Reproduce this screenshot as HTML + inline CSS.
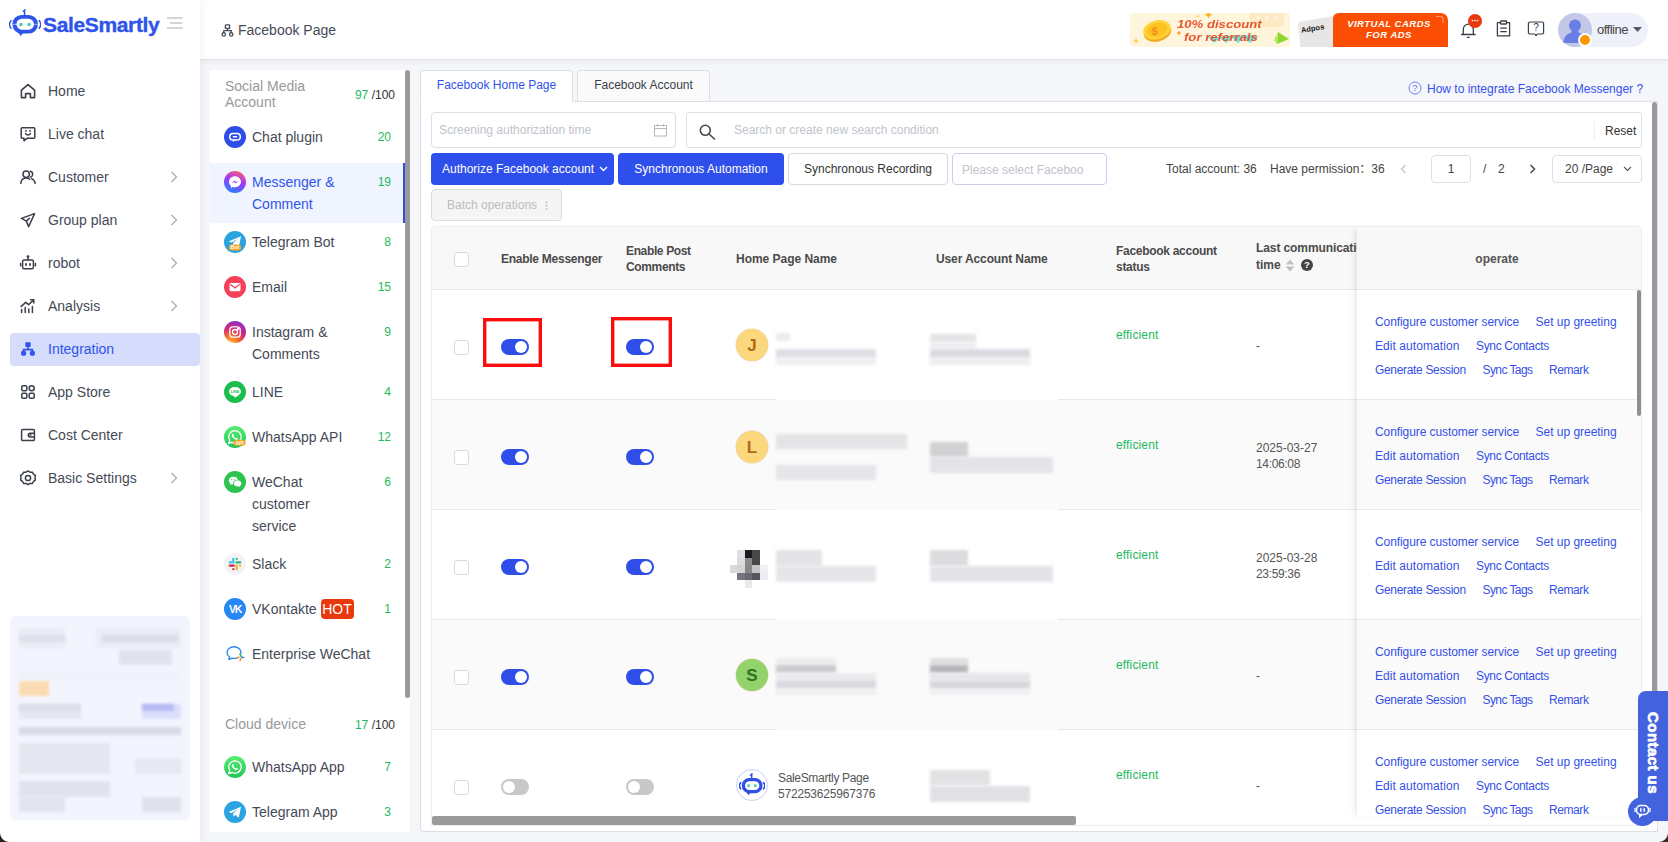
<!DOCTYPE html>
<html lang="en">
<head>
<meta charset="utf-8">
<title>Facebook Page - SaleSmartly</title>
<style>
*{box-sizing:border-box;margin:0;padding:0}
html,body{width:1668px;height:842px;overflow:hidden}
body{background:#f5f6f9;font-family:"Liberation Sans","Noto Sans CJK SC",sans-serif;font-size:14px;color:#333;position:relative}
.abs{position:absolute}
svg{display:block}
/* ---------- left sidebar ---------- */
#side{position:absolute;left:0;top:0;width:200px;height:842px;background:#fff;z-index:5;box-shadow:2px 0 8px rgba(29,35,41,.05)}
#logo-txt{position:absolute;left:43px;top:12.500px;-webkit-text-stroke:.4px #2f54eb;font-size:21px;line-height:24px;font-weight:bold;color:#2f54eb;letter-spacing:-0.35px;white-space:nowrap}
.nav{position:absolute;left:10px;width:190px;height:32px;border-radius:4px;font-size:14px;line-height:32px;color:#454a56;white-space:nowrap}
.nav span{position:absolute;left:38px;top:0}
.nav svg.ic{position:absolute;left:9px;top:7px}
.nav svg.ar{position:absolute;left:160px;top:10px}
.nav.on{background:#d6dcfb;color:#2f54eb;height:33px}
/* ---------- header ---------- */
#hdr{position:absolute;left:200px;top:0;width:1468px;height:60px;background:#fff;border-bottom:1px solid #e0e2e8;z-index:4;box-shadow:0 2px 6px rgba(0,21,41,.05)}
/* ---------- sub sidebar ---------- */
#sub{position:absolute;left:210px;top:70px;width:200px;height:762px;background:#fff;overflow:hidden}
.gh{position:absolute;left:0;width:200px;font-size:14px;line-height:16px;color:#999}
.gh .t{position:absolute;left:15px}
.gh .n{position:absolute;right:15px;font-size:12px;color:#333;white-space:nowrap}
.gh .n b{font-weight:normal;color:#1db95e}
.it{position:absolute;left:0;width:195px;font-size:14px;line-height:22px;color:#454a56}
.it .c{position:absolute;left:14px;top:8px;width:22px;height:22px;border-radius:50%;overflow:hidden}
.it .t{position:absolute;left:42px;top:8px;width:100px}
.it .n{position:absolute;right:14px;top:8px;font-size:12px;color:#1db95e}
.it.on{background:#f0f4ff;color:#2f54eb;border-right:2px solid #2f4de9}
.it.on .n{right:12px}
/* ---------- main ---------- */
#main{position:absolute;left:420px;top:102px;width:1238px;height:730px;background:#fff;border:1px solid #dcdfe6;border-top:none;border-radius:0 0 0 4px}
.tab{position:absolute;top:70px;height:32px;border:1px solid #dcdfe6;border-radius:4px 4px 0 0;font-size:12px;line-height:29px;text-align:center;white-space:nowrap}
.inp{position:absolute;border:1px solid #dcdfe6;border-radius:4px;background:#fff;font-size:12px;color:#c0c4cc;white-space:nowrap}
.btn{position:absolute;top:153px;height:32px;border-radius:4px;font-size:12px;line-height:32px;text-align:center;white-space:nowrap}
.btn.p{background:#2f4fec;color:#fff}
.btn.d{background:#fff;border:1px solid #d9d9d9;color:#333;line-height:30px}
.pg{position:absolute;font-size:12px;color:#444;white-space:nowrap;line-height:28px;top:155px}
/* ---------- table ---------- */
#tb{position:absolute;left:431px;top:226px;width:1211px;height:600px;border:1px solid #ebedf0;border-radius:4px 4px 0 0;overflow:hidden;background:#fff;font-size:12px}
.th{position:absolute;left:0;top:0;width:1211px;height:63px;background:#f8f8f8;border-bottom:1px solid #e8e8e8}
.th div{position:absolute;font-weight:bold;font-size:12px;line-height:16px;color:#4a4a4a;white-space:nowrap}
.row{position:absolute;left:0;width:1211px;height:110px;border-bottom:1px solid #e8e8e8;background:#fff}
.row.alt{background:#fafafa}
.cb{position:absolute;left:22px;width:15px;height:15px;border:1px solid #d5dae6;border-radius:3px;background:#fff}
.sw{position:absolute;width:28px;height:16px;border-radius:8px;background:#2f4de9}
.sw:after{content:"";position:absolute;right:2px;top:2px;width:12px;height:12px;border-radius:50%;background:#fff}
.sw.off{background:#c8c8c8}
.sw.off:after{right:auto;left:2px}
.av{position:absolute;left:304px;width:32px;height:32px;border-radius:50%;font-weight:bold;font-size:17px;line-height:33px;text-align:center}
.bl{position:absolute;background:#e3e3e6;filter:blur(1.5px)}
.ef{position:absolute;left:684px;color:#1db95e;line-height:16px;white-space:nowrap}
.tm{position:absolute;left:824px;color:#555;line-height:16px;white-space:nowrap}
#fx{position:absolute;left:1357px;top:227px;width:284px;height:590px;overflow:hidden;box-shadow:-4px 0 6px -2px rgba(0,0,0,.10)}
.op{position:absolute;left:0;width:284px;height:110px;border-bottom:1px solid #e8e8e8;background:#fff}
.op.alt{background:#fafafa}
.op a{position:absolute;color:#3550e8;font-size:12px;line-height:16px;white-space:nowrap;text-decoration:none}
.l0{letter-spacing:-.08px}.l1{letter-spacing:-.03px}.l2{letter-spacing:.07px}.l3{letter-spacing:-.34px}.l4{letter-spacing:-.33px}.l5{letter-spacing:-.58px}.l6{letter-spacing:-.42px}
</style>
</head>
<body>
<div id="side">
<svg class="abs" style="left:9px;top:9px" width="32" height="29" viewBox="9 9 32 29">
 <path d="M24.6 15.2V11.6l-1.2-.3 1.7-1.5" fill="none" stroke="#2f54eb" stroke-width="1.5" stroke-linecap="round" stroke-linejoin="round"/>
 <path d="M11 20.6a6 6 0 0 0 0 7.6M39.2 20.6a6 6 0 0 1 0 7.6" fill="none" stroke="#2f54eb" stroke-width="1.5" stroke-linecap="round"/>
 <rect x="12.4" y="14.9" width="25.5" height="18.7" rx="9.3" fill="#2f54eb"/>
 <path d="M18.2 32.5l2.6 3.6 2.6-3.6z" fill="#2f54eb"/>
 <rect x="16.4" y="18.8" width="17.6" height="10.9" rx="5.4" fill="#fff"/>
 <circle cx="20.9" cy="24.5" r="1.7" fill="#3ecfb6"/><circle cx="29.1" cy="24.5" r="1.7" fill="#3ecfb6"/>
 <path d="M12.4 24.3h4M34 24.3h4" stroke="#fff" stroke-width=".6"/>
</svg>
<div id="logo-txt">SaleSmartly</div>
<svg class="abs" style="left:167px;top:17px" width="16" height="12" viewBox="0 0 16 12"><path d="M0 1h15.5M3 6h12.5M0 11h15.5" stroke="#c5c8cf" stroke-width="1.3" fill="none"/></svg>

<div class="nav" style="top:75px"><svg class="ic" width="18" height="18" viewBox="0 0 18 18" fill="none" stroke="#3a3f4b" stroke-width="1.6" stroke-linejoin="round" stroke-linecap="round"><path d="M2.4 8.2 9 2.6l6.6 5.6v7.4h-4.2v-4H6.6v4H2.4z"/></svg><span>Home</span></div>

<div class="nav" style="top:118px"><svg class="ic" width="18" height="18" viewBox="0 0 18 18" fill="none" stroke="#3a3f4b" stroke-width="1.5" stroke-linejoin="round" stroke-linecap="round"><path d="M3.2 2.8h11.6a1 1 0 0 1 1 1v8.4a1 1 0 0 1-1 1H8.2L5 15.8v-2.6H3.2a1 1 0 0 1-1-1V3.8a1 1 0 0 1 1-1z"/><path d="M6.6 8.6c.6 1 1.4 1.4 2.4 1.4s1.800-.4 2.400-1.400"/><path d="M7 5.600v.6M11 5.600v.6"/></svg><span>Live chat</span></div>

<div class="nav" style="top:161px"><svg class="ic" width="18" height="18" viewBox="0 0 18 18" fill="none" stroke="#3a3f4b" stroke-width="1.5" stroke-linecap="round"><circle cx="7.200" cy="6.200" r="3.200"/><path d="M1.800 15.400c.3-3.400 2.400-5.400 5.400-5.400 1.400 0 2.600.4 3.500 1.200"/><path d="M11.400 3.300a3 3 0 0 1 0 5.800M12.600 10.600c2 .8 3.200 2.400 3.600 4.800"/></svg><span>Customer</span><svg class="ar" width="8" height="12" viewBox="0 0 8 12"><path d="M1.500 1l5 5-5 5" fill="none" stroke="#a9adb7" stroke-width="1.300"/></svg></div>

<div class="nav" style="top:204px"><svg class="ic" width="18" height="18" viewBox="0 0 18 18" fill="none" stroke="#3a3f4b" stroke-width="1.500" stroke-linejoin="round" stroke-linecap="round"><path d="M15.600 2.600 2.400 7.400l5 2.700 2.200 5.500zM7.400 10.100l3-2.900"/></svg><span>Group plan</span><svg class="ar" width="8" height="12" viewBox="0 0 8 12"><path d="M1.500 1l5 5-5 5" fill="none" stroke="#a9adb7" stroke-width="1.300"/></svg></div>

<div class="nav" style="top:247px"><svg class="ic" width="18" height="18" viewBox="0 0 18 18" fill="none" stroke="#3a3f4b" stroke-width="1.500" stroke-linejoin="round" stroke-linecap="round"><rect x="3.600" y="6" width="10.800" height="8.800" rx="1.600"/><path d="M9 6V3.200M1.600 9.400v2.400M16.400 9.400v2.400"/><path d="M7 9.800v1.200M11 9.800v1.200" stroke-width="1.800"/><circle cx="9" cy="2.600" r=".7" fill="#3a3f4b"/></svg><span>robot</span><svg class="ar" width="8" height="12" viewBox="0 0 8 12"><path d="M1.500 1l5 5-5 5" fill="none" stroke="#a9adb7" stroke-width="1.300"/></svg></div>

<div class="nav" style="top:290px"><svg class="ic" width="18" height="18" viewBox="0 0 18 18" fill="none" stroke="#3a3f4b" stroke-width="1.500" stroke-linecap="round" stroke-linejoin="round"><path d="M2.600 15.400v-2.800M6.200 15.400v-4.800M9.800 15.400v-3.400M13.400 15.400V9.600"/><path d="M2.200 9.400 6.800 5.400l2.800 2.200 5-4.600M11.600 2.800h3.200V6"/></svg><span>Analysis</span><svg class="ar" width="8" height="12" viewBox="0 0 8 12"><path d="M1.500 1l5 5-5 5" fill="none" stroke="#a9adb7" stroke-width="1.300"/></svg></div>

<div class="nav on" style="top:333px"><svg class="ic" width="18" height="18" viewBox="0 0 18 18"><rect x="6.300" y="2.200" width="5.400" height="4.800" rx=".8" fill="#2f54eb"/><path d="M9 7v2.400M4.600 12V9.600h8.800V12" fill="none" stroke="#2f54eb" stroke-width="1.600"/><circle cx="4.600" cy="13.200" r="2.600" fill="#2f54eb"/><circle cx="13.400" cy="13.200" r="2.600" fill="#2f54eb"/></svg><span>Integration</span></div>

<div class="nav" style="top:376px"><svg class="ic" width="18" height="18" viewBox="0 0 18 18" fill="none" stroke="#3a3f4b" stroke-width="1.500"><rect x="2.800" y="2.800" width="5" height="5" rx="1.200"/><rect x="10.200" y="2.800" width="5" height="5" rx="2.500"/><rect x="2.800" y="10.200" width="5" height="5" rx="1.200"/><rect x="10.200" y="10.200" width="5" height="5" rx="1.200"/></svg><span>App Store</span></div>

<div class="nav" style="top:419px"><svg class="ic" width="18" height="18" viewBox="0 0 18 18" fill="none" stroke="#3a3f4b" stroke-width="1.500" stroke-linejoin="round"><rect x="2.600" y="3.600" width="12.800" height="11" rx="1.200"/><path d="M15.400 7.200h-4.200a1.900 1.900 0 0 0 0 3.800h4.200"/><path d="M11 9.100h1" stroke-linecap="round"/></svg><span>Cost Center</span></div>

<div class="nav" style="top:462px"><svg class="ic" width="18" height="18" viewBox="0 0 18 18" fill="none" stroke="#3a3f4b" stroke-width="1.500" stroke-linejoin="round"><path d="M9 1.800l2 1.300 2.400-.1 1 2.100 2 1.300-.4 2.400.4 2.400-2 1.300-1 2.100-2.400-.1-2 1.300-2-1.300-2.400.1-1-2.100-2-1.300.4-2.400-.4-2.400 2-1.300 1-2.100 2.400.1z" transform="translate(0 .2) scale(1 .98)"/><circle cx="9" cy="9" r="2.600"/></svg><span>Basic Settings</span><svg class="ar" width="8" height="12" viewBox="0 0 8 12"><path d="M1.500 1l5 5-5 5" fill="none" stroke="#a9adb7" stroke-width="1.300"/></svg></div>

<div class="abs" style="left:10px;top:616px;width:180px;height:204px;background:#f3f5fe;border-radius:6px;overflow:hidden">
 <div class="bl" style="left:9px;top:12px;width:46px;height:20px;background:#eaecf5"></div><div class="bl" style="left:9px;top:19px;width:46px;height:7px;background:#dee0ea"></div>
 <div class="bl" style="left:86px;top:12px;width:85px;height:20px;background:#ebedf6"></div><div class="bl" style="left:92px;top:19px;width:76px;height:7px;background:#d9dbe6"></div>
 <div class="bl" style="left:109px;top:34px;width:53px;height:15px;background:#e1e2ed"></div>
 <div class="bl" style="left:9px;top:56px;width:162px;height:8px;background:#f0f2fb"></div>
 <div class="bl" style="left:9px;top:65px;width:30px;height:15px;background:#fbdcb2"></div>
 <div class="bl" style="left:9px;top:88px;width:62px;height:15px;background:#e6e7f1"></div><div class="bl" style="left:9px;top:88px;width:62px;height:7px;background:#dddeea"></div>
 <div class="bl" style="left:132px;top:88px;width:39px;height:15px;background:#dcdffb"></div><div class="bl" style="left:132px;top:88px;width:32px;height:7px;background:#b7bbf5"></div>
 <div class="bl" style="left:9px;top:111px;width:162px;height:8px;background:#d9dae7"></div>
 <div class="bl" style="left:9px;top:127px;width:91px;height:31px;background:#e4e6f0"></div>
 <div class="bl" style="left:125px;top:142px;width:46px;height:16px;background:#e7e8f2"></div>
 <div class="bl" style="left:9px;top:165px;width:91px;height:16px;background:#e1e2ed"></div>
 <div class="bl" style="left:9px;top:181px;width:46px;height:15px;background:#e2e4ee"></div>
 <div class="bl" style="left:132px;top:181px;width:39px;height:15px;background:#e0e1ec"></div>
</div>
<svg class="abs" style="left:0;top:833px" width="9" height="9" viewBox="0 0 9 9"><path d="M0 0A9 9 0 0 0 9 9H0z" fill="#2a2118"/></svg>
</div>
<div id="hdr">
<!-- coordinates inside #hdr are page-x minus 200 -->
<svg class="abs" style="left:20.500px;top:23.500px" width="13" height="13" viewBox="0 0 14 14" fill="none" stroke="#474c58" stroke-width="1.400"><rect x="4.700" y="1" width="4.600" height="3.800" rx=".6"/><path d="M7 4.800v2.400M3 9.400V7.200h8v2.200"/><circle cx="3" cy="11.200" r="1.800"/><circle cx="11" cy="11.200" r="1.800"/></svg>
<div class="abs" style="left:38px;top:21px;font-size:14px;line-height:18px;color:#454a56;white-space:nowrap">Facebook Page</div>

<!-- banner 1 -->
<div class="abs" style="left:930px;top:13px;width:160px;height:34px;background:#fff4dc;border-radius:4px;overflow:hidden">
 <div class="abs" style="left:120px;top:0;width:34px;height:14px;background:#fdeac4;border-radius:0 0 3px 3px"></div>
 <svg class="abs" style="left:0;top:0" width="160" height="34" viewBox="0 0 160 34">
  <ellipse cx="27.500" cy="19" rx="14" ry="9.500" fill="#f2a91c" transform="rotate(-14 27.500 19)"/>
  <ellipse cx="27" cy="16.800" rx="14" ry="9.400" fill="#ffd43a" transform="rotate(-14 27 16.800)"/>
  <ellipse cx="27" cy="16.800" rx="10.500" ry="6.800" fill="#ffc321" transform="rotate(-14 27 16.800)"/>
  <text x="21.500" y="21.500" font-family="Liberation Sans, sans-serif" font-size="11" font-weight="bold" font-style="italic" fill="#f08a1c" transform="rotate(-10 27 17)">$</text>
  <path d="M78.500 -2l1.300 2.700 2.700 1.100-2.700 1.200-1.300 2.700-1.300-2.700-2.700-1.200 2.700-1.100z" fill="#f9b91d"/>
  <path d="M68 1.200l.7 1.400 1.400.6-1.400.6-.7 1.400-.7-1.400-1.400-.6 1.400-.6z" fill="#fbd46a"/>
  <path d="M49 17.500l.9 1.700 1.700.8-1.700.8-.9 1.700-.9-1.700-1.700-.8 1.700-.8z" fill="#f9a11d"/>
  <path d="M6 25l1 2 2 .9-2 .9-1 2-1-2-2-.9 2-.9z" fill="#fbd05a"/>
  <path d="M78 24l6 6 6-5 6 5 6-5 6 5 6-5 6 5 8-6-4-2z" fill="#5ce1e6" opacity=".9"/>
  <path d="M148 19l11 7-12 5z" fill="#8fd634"/><path d="M148 19l-1 12-3-4z" fill="#b6ea5c"/>
  <circle cx="128" cy="4.500" r="1.600" fill="#fff6e3"/><circle cx="137" cy="4.500" r="1.600" fill="#fff6e3"/><circle cx="146" cy="4.500" r="1.600" fill="#fff6e3"/>
 </svg>
 <div class="abs" style="left:47px;top:6px;font-size:10.500px;line-height:11px;font-weight:bold;font-style:italic;color:#e4572e;white-space:nowrap;transform-origin:0 0;transform:scaleX(1.25)">10% discount</div>
 <div class="abs" style="left:54px;top:19px;font-size:10.500px;line-height:11px;font-weight:bold;font-style:italic;color:#e4572e;white-space:nowrap;transform-origin:0 0;transform:scaleX(1.25)">for referrals</div>
</div>

<!-- banner 2 -->
<div class="abs" style="left:1098px;top:13px;width:150px;height:34px;overflow:hidden;border-radius:0 7px 0 0">
 <svg class="abs" style="left:0;top:0" width="150" height="34" viewBox="0 0 150 34"><path d="M0 12q0-3 3-3.600L36 3v31H2.500z" fill="#e6e6e6"/><path d="M35 6q0-6 6-6h103q6 0 6 6v28H35z" fill="#fb4d03"/><path d="M138 3.500h4.500q2.500 0 2.500 2.500v4" fill="none" stroke="#fd9a6c" stroke-width="1.200"/><path d="M23 12.500q2.500-.5 3 1.800" fill="none" stroke="#fb4d03" stroke-width=".8"/></svg>
 <div class="abs" style="left:3px;top:11px;font-size:7.500px;line-height:10px;font-weight:bold;color:#222;transform:rotate(-9deg);white-space:nowrap">Adpos</div>
 <div class="abs" style="left:34.500px;top:6px;width:113px;text-align:center;font-size:9.500px;line-height:10.500px;font-weight:bold;font-style:italic;color:#fff;letter-spacing:.5px;white-space:nowrap">VIRTUAL CARDS<br>FOR ADS</div>
</div>

<!-- bell -->
<svg class="abs" style="left:1260px;top:21px" width="17" height="18" viewBox="0 0 17 18" fill="none" stroke="#3a3f4b" stroke-width="1.300" stroke-linecap="round" stroke-linejoin="round"><path d="M1.500 13.500h13.600M3.300 13.500V8.200a5 5 0 0 1 10 0v5.300M7.300 16.300h2"/></svg>
<div class="abs" style="left:1268px;top:14px;width:14px;height:14px;border-radius:50%;background:#e8380d;color:#fff;font-size:9px;line-height:14px;text-align:center;letter-spacing:-.5px;font-weight:bold">···</div>
<!-- clipboard -->
<svg class="abs" style="left:1296px;top:20px" width="15" height="17" viewBox="0 0 15 17" fill="none" stroke="#3a3f4b" stroke-width="1.300" stroke-linejoin="round"><path d="M4.500 2.600H1.400v13.200h12.200V2.600h-3.100"/><rect x="4.500" y="1" width="6" height="3" rx=".4"/><path d="M4.200 8.200h6.600M4.200 11.600h6.600"/></svg>
<!-- help -->
<svg class="abs" style="left:1327px;top:21px" width="18" height="16" viewBox="0 0 18 16" fill="none" stroke="#3a3f4b" stroke-width="1.200" stroke-linejoin="round"><path d="M2.800 1h12.400a1.400 1.400 0 0 1 1.400 1.400v9.200a1.400 1.400 0 0 1-1.400 1.400H10.200L9 14.600 7.800 13H2.800a1.400 1.400 0 0 1-1.400-1.400V2.400A1.400 1.400 0 0 1 2.800 1z"/></svg>
<div class="abs" style="left:1327px;top:22px;width:18px;text-align:center;font-size:10px;line-height:11px;color:#3a3f4b">?</div>
<!-- user -->
<div class="abs" style="left:1358px;top:13px;width:90px;height:34px;border-radius:17px;background:#eef1f9"></div>
<div class="abs" style="left:1358px;top:13px;width:34px;height:34px;border-radius:50%;background:#c3c8e8;overflow:hidden">
 <svg width="34" height="34" viewBox="0 0 34 34"><circle cx="17" cy="12.500" r="6" fill="#6a7ee6"/><path d="M5 30q1-9 8.500-10.500h7Q28 21 29 30z" fill="#6a7ee6"/><rect x="13.500" y="16" width="7" height="6" fill="#6a7ee6"/></svg>
</div>
<div class="abs" style="left:1378px;top:33px;width:14px;height:14px;border-radius:50%;background:#ff9800;border:2px solid #fff"></div>
<div class="abs" style="left:1397px;top:21px;font-size:13px;letter-spacing:-.5px;line-height:18px;color:#444;white-space:nowrap">offline</div>
<svg class="abs" style="left:1433px;top:27px" width="9" height="5" viewBox="0 0 9 5"><path d="M0 0h9L4.500 5z" fill="#555a66"/></svg>
</div>
<div id="sub">
<div class="gh" style="top:0;height:48px"><div class="t" style="top:8px">Social Media<br>Account</div><div class="n" style="top:17px"><b>97</b> /100</div></div>

<div class="it" style="top:48px;height:45px"><div class="c" style="background:#2f4de9"><svg width="22" height="22" viewBox="0 0 22 22"><rect x="5.700" y="7.500" width="10.600" height="6.600" rx="3.300" fill="none" stroke="#fff" stroke-width="1.500"/><path d="M8.800 10.800h4.400" stroke="#fff" stroke-width="1.400"/><path d="M8.600 14l.6 2 1.800-2z" fill="#fff"/></svg></div><div class="t">Chat plugin</div><div class="n">20</div></div>

<div class="it on" style="top:93px;height:60px"><div class="c" style="background:linear-gradient(200deg,#ff6968 5%,#a334fa 45%,#0695ff 100%)"><svg width="22" height="22" viewBox="0 0 22 22"><path d="M11 5.200c-3.400 0-6 2.400-6 5.600 0 1.700.7 3.100 1.900 4.100v2l1.900-1c.7.200 1.400.3 2.200.3 3.400 0 6-2.400 6-5.400S14.400 5.200 11 5.200z" fill="#fff"/><path d="M7.600 12.600l2.500-3 1.800 1.500 2.500-1.500-2.500 3-1.800-1.500z" fill="#a640f5"/></svg></div><div class="t">Messenger &amp; Comment</div><div class="n">19</div></div>

<div class="it" style="top:153px;height:45px"><div class="c" style="background:#2aa3e0"><svg width="22" height="22" viewBox="0 0 22 22"><path d="M4.500 10.500 17 5.200l-2.200 11-3.600-2.800-1.800 1.800-.3-3.200 5.400-4.800-6.800 4.200z" fill="#fff"/><rect x="4.800" y="13.600" width="12.400" height="6" rx="3" fill="#f5a623"/><text x="11" y="18.400" font-size="5" font-weight="bold" fill="#fff" text-anchor="middle" font-family="Liberation Sans, sans-serif">Bot</text></svg></div><div class="t">Telegram Bot</div><div class="n">8</div></div>

<div class="it" style="top:198px;height:45px"><div class="c" style="background:#f4405a"><svg width="22" height="22" viewBox="0 0 22 22"><rect x="5.500" y="7" width="11" height="8.200" rx="1.400" fill="#fff"/><path d="M6.300 8.200 11 12l4.700-3.800" fill="none" stroke="#f4405a" stroke-width="1.300"/></svg></div><div class="t">Email</div><div class="n">15</div></div>

<div class="it" style="top:243px;height:60px"><div class="c" style="background:radial-gradient(circle at 30% 105%,#fdc468 0%,#fa7e1e 25%,#d62976 55%,#962fbf 80%,#4f5bd5 100%)"><svg width="22" height="22" viewBox="0 0 22 22" fill="none" stroke="#fff" stroke-width="1.300"><rect x="5.800" y="5.800" width="10.400" height="10.400" rx="3"/><circle cx="11" cy="11" r="2.500"/><circle cx="14" cy="8" r=".5" fill="#fff"/></svg></div><div class="t">Instagram &amp; Comments</div><div class="n">9</div></div>

<div class="it" style="top:303px;height:45px"><div class="c" style="background:#1bbd4c"><svg width="22" height="22" viewBox="0 0 22 22"><path d="M11 6c-3.300 0-6 2-6 4.600 0 2.300 2 4.100 4.900 4.500.5.100.4.300.3.900 0 .3-.2.900.7.400 1-.4 4.300-2.500 5.400-4 .5-.6.700-1.200.700-1.800C17 8 14.300 6 11 6z" fill="#fff"/><text x="11" y="12.200" font-size="3.800" font-weight="bold" fill="#1bbd4c" text-anchor="middle" font-family="Liberation Sans, sans-serif">LINE</text></svg></div><div class="t">LINE</div><div class="n">4</div></div>

<div class="it" style="top:348px;height:45px"><div class="c" style="background:linear-gradient(#58ef72,#22c457);overflow:visible"><svg width="22" height="22" viewBox="0 0 22 22" style="overflow:visible"><path d="M11 4.600a6.200 6.200 0 0 0-5.300 9.400l-.9 3.200 3.300-.9A6.200 6.200 0 1 0 11 4.600z" fill="none" stroke="#fff" stroke-width="1.300"/><path d="M8.600 8c.3-.3.700-.2.800.1l.5 1.200c.1.300-.3.600-.4.800.5 1 1.200 1.700 2.300 2.200.2-.2.500-.7.800-.6l1.200.6c.3.200.2.600 0 .9-.6.800-1.700.8-2.700.3-1.500-.7-2.700-2-3.200-3.500-.200-.8 0-1.500.700-2z" fill="#fff"/><rect x="9.600" y="13.800" width="12" height="6" rx="3" fill="#f5a623"/><text x="15.600" y="18.500" font-size="4.800" font-weight="bold" fill="#fff" text-anchor="middle" font-family="Liberation Sans, sans-serif">API</text></svg></div><div class="t">WhatsApp API</div><div class="n">12</div></div>

<div class="it" style="top:393px;height:82px"><div class="c" style="background:#2dc34f"><svg width="22" height="22" viewBox="0 0 22 22"><path d="M9.400 5.800c-2.600 0-4.600 1.700-4.600 3.800 0 1.200.7 2.300 1.700 3l-.4 1.400 1.600-.8c.5.100 1 .2 1.500.2a4 4 0 0 1-.1-1c0-2 1.900-3.600 4.300-3.600h.5c-.4-1.700-2.300-3-4.500-3z" fill="#fff"/><path d="M17.400 12.400c0-1.700-1.700-3.100-3.800-3.100s-3.800 1.400-3.800 3.100 1.700 3.100 3.800 3.100c.4 0 .9-.1 1.300-.2l1.300.7-.3-1.200c.9-.6 1.500-1.400 1.500-2.400z" fill="#fff"/><circle cx="7.800" cy="8.600" r=".6" fill="#2dc34f"/><circle cx="10.800" cy="8.600" r=".6" fill="#2dc34f"/></svg></div><div class="t">WeChat customer service</div><div class="n">6</div></div>

<div class="it" style="top:475px;height:45px"><div class="c" style="background:#f3f3f4"><svg width="22" height="22" viewBox="0 0 22 22" stroke-linecap="round" stroke-width="2.200" fill="none"><path d="M9.300 5.800v4" stroke="#36c5f0"/><path d="M5.800 9.300h1.600" stroke="#36c5f0"/><path d="M12.700 5.800v.1" stroke="#2eb67d"/><path d="M12.300 9.300h4" stroke="#2eb67d"/><path d="M16.200 12.700h-.1" stroke="#ecb22e"/><path d="M12.700 12.300v4" stroke="#ecb22e"/><path d="M9.300 16.200v-.1" stroke="#e01e5a"/><path d="M5.800 12.700h4" stroke="#e01e5a"/></svg></div><div class="t">Slack</div><div class="n">2</div></div>

<div class="it" style="top:520px;height:45px"><div class="c" style="background:#2787f5"><svg width="22" height="22" viewBox="0 0 22 22"><text x="11" y="15" font-size="10.500" font-weight="bold" fill="#fff" text-anchor="middle" font-family="Liberation Sans, sans-serif" letter-spacing="-1.200">VK</text></svg></div><div class="t" style="width:150px;white-space:nowrap">VKontakte <span style="display:inline-block;width:33px;height:20px;line-height:20px;margin-left:0;background:#e8380d;color:#fff;border-radius:4px;text-align:center;vertical-align:top;margin-top:1px">HOT</span></div><div class="n">1</div></div>

<div class="it" style="top:565px;height:45px"><div class="c" style="border-radius:0"><svg width="22" height="22" viewBox="0 0 22 22" fill="none"><path d="M10 3.800c-4 0-7 2.500-7 5.800 0 1.800 1 3.400 2.500 4.400l-.5 2.600 2.800-1.500c.7.200 1.400.3 2.200.3 1.200 0 2.300-.2 3.300-.6M16.600 11c.3-.500.400-1 .4-1.400 0-3.300-3-5.800-7-5.800" stroke="#2b8bf0" stroke-width="1.400" stroke-linecap="round" stroke-linejoin="round"/><path d="M16 11.200l1.600 2 2.200.4-1.800 1.400-.6 2.600-1.600-2-2.300-.3 1.800-1.600z" fill="#fff"/><path d="M16 11.400l1.300 2.200" stroke="#3ab54a" stroke-width="1.500" stroke-linecap="round"/><path d="M17.600 14.200l2.100.2" stroke="#2b8bf0" stroke-width="1.500" stroke-linecap="round"/><path d="M16.800 15.600l-.7 2" stroke="#f7931e" stroke-width="1.500" stroke-linecap="round"/><path d="M15 14.300l-1.700.5" stroke="#f7931e" stroke-width="1.500" stroke-linecap="round"/></svg></div><div class="t" style="width:150px;white-space:nowrap">Enterprise WeChat</div></div>

<div class="gh" style="top:630px;height:48px"><div class="t" style="top:16px;color:#999">Cloud device</div><div class="n" style="top:17px"><b>17</b> /100</div></div>

<div class="it" style="top:678px;height:45px"><div class="c" style="background:linear-gradient(#58ef72,#22c457)"><svg width="22" height="22" viewBox="0 0 22 22"><path d="M11 4.800a6.200 6.200 0 0 0-5.300 9.400l-.9 3.200 3.300-.9A6.200 6.200 0 1 0 11 4.800z" fill="none" stroke="#fff" stroke-width="1.300"/><path d="M8.600 8.200c.3-.3.700-.2.800.1l.5 1.200c.1.300-.3.600-.4.800.5 1 1.200 1.700 2.300 2.200.2-.2.500-.7.800-.6l1.200.6c.3.200.2.600 0 .9-.6.800-1.700.8-2.700.3-1.500-.7-2.700-2-3.200-3.500-.200-.8 0-1.500.700-2z" fill="#fff"/></svg></div><div class="t">WhatsApp App</div><div class="n">7</div></div>

<div class="it" style="top:723px;height:45px"><div class="c" style="background:#2aa3e0"><svg width="22" height="22" viewBox="0 0 22 22"><path d="M4.500 11 17 5.700l-2.200 11-3.600-2.800-1.800 1.800-.3-3.200 5.400-4.800-6.800 4.200z" fill="#fff"/></svg></div><div class="t">Telegram App</div><div class="n">3</div></div>

<div class="abs" style="left:195px;top:0;width:5px;height:628px;border-radius:3px;background:#9a9a9a"></div>
</div>
<div class="tab" style="left:420px;width:153px;background:#fff;color:#2f54eb;border-bottom-color:#fff;z-index:2">Facebook Home Page</div>
<div class="tab" style="left:577px;width:133px;background:#fafafa;color:#3a3f4b;border-bottom:none">Facebook Account</div>
<div class="abs" style="left:573px;top:101px;width:1085px;height:1px;background:#dcdfe6"></div>
<svg class="abs" style="left:1408px;top:81px" width="14" height="14" viewBox="0 0 14 14" fill="none" stroke="#6f80f0" stroke-width="1"><circle cx="7" cy="7" r="6"/></svg>
<div class="abs" style="left:1408px;top:82px;width:14px;text-align:center;font-size:9.500px;line-height:12px;color:#5b6ef0">?</div>
<div class="abs" style="left:1427px;top:81px;font-size:12px;line-height:16px;color:#3550ee;white-space:nowrap">How to integrate Facebook Messenger ?</div>

<div id="main"></div>

<!-- filter row -->
<div class="inp" style="left:431px;top:112px;width:245px;height:36px;line-height:34px;padding-left:7px">Screening authorization time
 <svg class="abs" style="left:222px;top:11px" width="14" height="13" viewBox="0 0 14 13" fill="none" stroke="#b5b8bf" stroke-width="1"><rect x=".5" y="1.500" width="12" height="10.500"/><path d="M.5 4.500h12M3.500 0v2.500M9.500 0v2.500"/></svg>
</div>
<div class="inp" style="left:686px;top:112px;width:956px;height:36px;line-height:34px;padding-left:47px">Search or create new search condition
 <svg class="abs" style="left:12px;top:11px" width="17" height="16" viewBox="0 0 17 16" fill="none" stroke="#484848" stroke-width="1.600" stroke-linecap="round"><circle cx="6.300" cy="6.300" r="5"/><path d="M10 10l5.500 5"/></svg>
 <div class="abs" style="left:907px;top:8px;width:1px;height:18px;background:#ebedf0"></div>
 <div class="abs" style="left:918px;top:1px;color:#333;font-size:12px">Reset</div>
</div>

<!-- buttons -->
<div class="btn p" style="left:431px;width:183px;text-align:left;padding-left:11px">Authorize Facebook account<svg class="abs" style="left:168px;top:13px" width="9" height="6" viewBox="0 0 9 6"><path d="M1 1l3.500 3.500L8 1" fill="none" stroke="#fff" stroke-width="1.400"/></svg></div>
<div class="btn p" style="left:618px;width:166px">Synchronous Automation</div>
<div class="btn d" style="left:788px;width:160px">Synchronous Recording</div>
<div class="inp" style="left:952px;top:153px;width:155px;height:32px;line-height:33px;padding-left:9px;border-color:#c9cfee">Please select Faceboo</div>
<div class="btn" style="left:431px;top:189px;width:131px;height:32px;line-height:30px;background:#f5f5f5;border:1px solid #dcdcdc;color:#bcbcbc;text-align:left;padding-left:15px">Batch operations<svg class="abs" style="left:113px;top:11px" width="3" height="9" viewBox="0 0 3 9"><circle cx="1.500" cy="1.200" r=".9" fill="#bcbcbc"/><circle cx="1.500" cy="4.500" r=".9" fill="#bcbcbc"/><circle cx="1.500" cy="7.800" r=".9" fill="#bcbcbc"/></svg></div>

<!-- pagination -->
<div class="pg" style="left:1166px">Total account: 36</div>
<div class="pg" style="left:1270px">Have permission：36</div>
<svg class="abs" style="left:1400px;top:164px" width="7" height="10" viewBox="0 0 7 10"><path d="M5.500 1L1.500 5l4 4" fill="none" stroke="#c0c4cc" stroke-width="1.300"/></svg>
<div class="inp" style="left:1431px;top:155px;width:40px;height:28px;line-height:26px;text-align:center;color:#444">1</div>
<div class="pg" style="left:1483px">/</div>
<div class="pg" style="left:1498px">2</div>
<svg class="abs" style="left:1529px;top:164px" width="7" height="10" viewBox="0 0 7 10"><path d="M1.500 1l4 4-4 4" fill="none" stroke="#444" stroke-width="1.400"/></svg>
<div class="inp" style="left:1552px;top:155px;width:90px;height:28px;line-height:26px;padding-left:12px;color:#444">20 /Page<svg class="abs" style="left:70px;top:10px" width="9" height="6" viewBox="0 0 9 6"><path d="M1 1l3.500 3.500L8 1" fill="none" stroke="#555" stroke-width="1.100"/></svg></div>

<!-- table -->
<div id="tb">
<div class="th"><span class="cb" style="top:25px"></span><div style="left:69px;top:24px;letter-spacing:-.26px">Enable Messenger</div><div style="left:194px;top:16px;letter-spacing:-.36px">Enable Post<br>Comments</div><div style="left:304px;top:24px;letter-spacing:-.03px">Home Page Name</div><div style="left:504px;top:24px;letter-spacing:-.12px">User Account Name</div><div style="left:684px;top:16px;letter-spacing:-.29px">Facebook account<br>status</div><div style="left:824px;top:13px;letter-spacing:-.1px">Last communication</div><div style="left:824px;top:30px">time</div><svg class="abs" style="left:853px;top:32px" width="10" height="13" viewBox="0 0 10 13"><path d="M5 .5l4.300 5H.7z" fill="#c4c4c4"/><path d="M5 12.500l4.300-5H.7z" fill="#bdbdbd"/></svg><span class="abs" style="left:869px;top:32px;width:12px;height:12px;border-radius:50%;background:#444;color:#fff;font-size:9.500px;line-height:12px;text-align:center;font-weight:bold">?</span></div>
<div class="row" style="top:63px"><span class="cb" style="top:50px"></span><span class="sw" style="left:69px;top:49px"></span><span class="sw" style="left:194px;top:49px"></span><svg class="abs" style="left:51px;top:27px" width="190" height="51" viewBox="0 0 190 51" fill="none" stroke="#fb0d0d" stroke-width="3.400"><rect x="1.700" y="2.700" width="55.600" height="45.600"/><rect x="129.700" y="1.700" width="57.600" height="46.600"/></svg><div class="av" style="top:39px;background:#fbd77d;color:#b0681c;box-shadow:0 0 0 .5px rgba(190,140,40,.35)">J</div><div class="bl" style="left:344px;top:43px;width:14px;height:8px;background:#ececef"></div><div class="bl" style="left:344px;top:59px;width:100px;height:9px;background:#dedfe5"></div><div class="bl" style="left:344px;top:68px;width:100px;height:7px;background:#efeff2"></div><div class="bl" style="left:498px;top:44px;width:46px;height:8px;background:#e4e4e7"></div><div class="bl" style="left:498px;top:52px;width:46px;height:7px;background:#eeeef0"></div><div class="bl" style="left:498px;top:59px;width:100px;height:9px;background:#dadbe1"></div><div class="bl" style="left:498px;top:68px;width:100px;height:7px;background:#eeeef1"></div><div class="ef" style="top:37px;letter-spacing:.15px">efficient</div><div class="tm" style="top:48px">-</div><span class="abs" style="left:344px;top:104px;width:282px;height:6px;background:#fff"></span></div>
<div class="row alt" style="top:173px"><span class="cb" style="top:50px"></span><span class="sw" style="left:69px;top:49px"></span><span class="sw" style="left:194px;top:49px"></span><div class="av" style="top:31px;background:#fbd77d;color:#b0681c;box-shadow:0 0 0 .5px rgba(190,140,40,.35)">L</div><div class="bl" style="left:344px;top:34px;width:131px;height:15px;background:#e4e4e6"></div><div class="bl" style="left:344px;top:65px;width:100px;height:15px;background:#e5e5ea"></div><div class="bl" style="left:498px;top:42px;width:38px;height:15px;background:#d2d2d4"></div><div class="bl" style="left:498px;top:57px;width:123px;height:16px;background:#e3e3e8"></div><div class="ef" style="top:37px;letter-spacing:.15px">efficient</div><div class="tm" style="top:40px">2025-03-27<br><span style="letter-spacing:-.34px">14:06:08</span></div><span class="abs" style="left:344px;top:104px;width:282px;height:6px;background:#fbfbfb"></span></div>
<div class="row" style="top:283px"><span class="cb" style="top:50px"></span><span class="sw" style="left:69px;top:49px"></span><span class="sw" style="left:194px;top:49px"></span><div class="abs" style="left:297.600px;top:40px;width:38px;height:38px;filter:blur(.5px)"><span class="abs" style="left:7.6px;top:0.0px;width:7.700px;height:7.700px;background:#e0e0e3"></span><span class="abs" style="left:15.2px;top:0.0px;width:7.700px;height:7.700px;background:#1b1c20"></span><span class="abs" style="left:22.8px;top:0.0px;width:7.700px;height:7.700px;background:#47474b"></span><span class="abs" style="left:7.6px;top:7.6px;width:7.700px;height:7.700px;background:#dcdcde"></span><span class="abs" style="left:15.2px;top:7.6px;width:7.700px;height:7.700px;background:#8a8a8d"></span><span class="abs" style="left:22.8px;top:7.6px;width:7.700px;height:7.700px;background:#4a4646"></span><span class="abs" style="left:0.0px;top:15.2px;width:7.700px;height:7.700px;background:#dadadc"></span><span class="abs" style="left:7.6px;top:15.2px;width:7.700px;height:7.700px;background:#d4d4d4"></span><span class="abs" style="left:15.2px;top:15.2px;width:7.700px;height:7.700px;background:#868688"></span><span class="abs" style="left:22.8px;top:15.2px;width:7.700px;height:7.700px;background:#c4c4c4"></span><span class="abs" style="left:30.4px;top:15.2px;width:7.700px;height:7.700px;background:#f1f1f5"></span><span class="abs" style="left:7.6px;top:22.8px;width:7.700px;height:7.700px;background:#74757f"></span><span class="abs" style="left:15.2px;top:22.8px;width:7.700px;height:7.700px;background:#6a6a6e"></span><span class="abs" style="left:22.8px;top:22.8px;width:7.700px;height:7.700px;background:#55565c"></span><span class="abs" style="left:30.4px;top:22.8px;width:7.700px;height:7.700px;background:#ecedf3"></span><span class="abs" style="left:15.2px;top:30.4px;width:7.700px;height:7.700px;background:#e9e9eb"></span></div><div class="bl" style="left:344px;top:40px;width:46px;height:16px;background:#e3e3e6"></div><div class="bl" style="left:344px;top:56px;width:100px;height:16px;background:#e6e6ea"></div><div class="bl" style="left:498px;top:40px;width:38px;height:16px;background:#dcdcdf"></div><div class="bl" style="left:498px;top:56px;width:123px;height:16px;background:#e4e4e8"></div><div class="ef" style="top:37px;letter-spacing:.15px">efficient</div><div class="tm" style="top:40px">2025-03-28<br><span style="letter-spacing:-.34px">23:59:36</span></div><span class="abs" style="left:344px;top:104px;width:282px;height:6px;background:#fff"></span></div>
<div class="row alt" style="top:393px"><span class="cb" style="top:50px"></span><span class="sw" style="left:69px;top:49px"></span><span class="sw" style="left:194px;top:49px"></span><div class="av" style="top:39px;background:#93d36c;color:#2f6f24;box-shadow:0 0 0 .5px rgba(190,140,40,.35)">S</div><div class="bl" style="left:344px;top:38px;width:60px;height:7px;background:#ececee"></div><div class="bl" style="left:344px;top:45px;width:60px;height:8px;background:#cbcbcf"></div><div class="bl" style="left:344px;top:53px;width:100px;height:7px;background:#ebebee"></div><div class="bl" style="left:344px;top:60px;width:100px;height:9px;background:#d9d9df"></div><div class="bl" style="left:344px;top:69px;width:100px;height:6px;background:#f0f0f2"></div><div class="bl" style="left:498px;top:38px;width:38px;height:7px;background:#dedee0"></div><div class="bl" style="left:498px;top:45px;width:38px;height:8px;background:#b6b6ba"></div><div class="bl" style="left:498px;top:53px;width:100px;height:8px;background:#e6e6ea"></div><div class="bl" style="left:498px;top:61px;width:100px;height:8px;background:#d6d6dc"></div><div class="bl" style="left:498px;top:69px;width:100px;height:6px;background:#f0f0f3"></div><div class="ef" style="top:37px;letter-spacing:.15px">efficient</div><div class="tm" style="top:48px">-</div><span class="abs" style="left:344px;top:104px;width:282px;height:6px;background:#fbfbfb"></span></div>
<div class="row" style="top:503px"><span class="cb" style="top:50px"></span><span class="sw off" style="left:69px;top:49px"></span><span class="sw off" style="left:194px;top:49px"></span><div class="abs" style="left:304px;top:39px;width:32px;height:32px;border-radius:50%;border:1px solid #c9d0f7;background:#fff"><svg class="abs" style="left:2px;top:3px" width="26" height="24" viewBox="9 9 32 29"><path d="M24.600 15.200V11.600l-1.200-.3 1.700-1.500" fill="none" stroke="#2f4de9" stroke-width="1.800" stroke-linecap="round"/><path d="M11 20.600a6 6 0 0 0 0 7.600M39.200 20.600a6 6 0 0 1 0 7.600" fill="none" stroke="#2f4de9" stroke-width="2" stroke-linecap="round"/><rect x="12.400" y="14.900" width="25.500" height="18.700" rx="9.300" fill="#2f4de9"/><path d="M18.200 32.500l2.600 3.600 2.600-3.600z" fill="#2f4de9"/><rect x="16.400" y="18.800" width="17.600" height="10.900" rx="5.400" fill="#fff"/><circle cx="20.900" cy="24.500" r="1.800" fill="#3ecfb6"/><circle cx="29.100" cy="24.500" r="1.800" fill="#3ecfb6"/></svg></div><div class="abs" style="left:346px;top:40px;line-height:16px;color:#555;white-space:nowrap"><span style="letter-spacing:-.33px">SaleSmartly Page</span><br><span style="letter-spacing:-.2px">572253625967376</span></div><div class="bl" style="left:498px;top:40px;width:60px;height:15px;background:#e2e2e5"></div><div class="bl" style="left:498px;top:56px;width:100px;height:16px;background:#e0e0e5"></div><div class="ef" style="top:37px;letter-spacing:.15px">efficient</div><div class="tm" style="top:48px">-</div></div>
<div class="abs" style="left:0;top:589px;width:644px;height:9px;background:#9b9b9b;border-radius:2px"></div>
</div>
<div id="fx"><div class="abs" style="left:0;top:0;width:284px;height:63px;background:#f8f8f8;border-bottom:1px solid #e8e8e8;font-weight:bold;font-size:12px;line-height:64px;text-align:center;color:#555;padding-right:4px">operate</div>
<div class="op" style="top:63px"><a class="l0" style="left:18px;top:24px">Configure customer service</a><a class="l1" style="left:178.6px;top:24px">Set up greeting</a><a class="l2" style="left:18px;top:48px">Edit automation</a><a class="l3" style="left:119px;top:48px">Sync Contacts</a><a class="l4" style="left:18px;top:72px">Generate Session</a><a class="l5" style="left:125.5px;top:72px">Sync Tags</a><a class="l6" style="left:192px;top:72px">Remark</a></div>
<div class="op alt" style="top:173px"><a class="l0" style="left:18px;top:24px">Configure customer service</a><a class="l1" style="left:178.6px;top:24px">Set up greeting</a><a class="l2" style="left:18px;top:48px">Edit automation</a><a class="l3" style="left:119px;top:48px">Sync Contacts</a><a class="l4" style="left:18px;top:72px">Generate Session</a><a class="l5" style="left:125.5px;top:72px">Sync Tags</a><a class="l6" style="left:192px;top:72px">Remark</a></div>
<div class="op" style="top:283px"><a class="l0" style="left:18px;top:24px">Configure customer service</a><a class="l1" style="left:178.6px;top:24px">Set up greeting</a><a class="l2" style="left:18px;top:48px">Edit automation</a><a class="l3" style="left:119px;top:48px">Sync Contacts</a><a class="l4" style="left:18px;top:72px">Generate Session</a><a class="l5" style="left:125.5px;top:72px">Sync Tags</a><a class="l6" style="left:192px;top:72px">Remark</a></div>
<div class="op alt" style="top:393px"><a class="l0" style="left:18px;top:24px">Configure customer service</a><a class="l1" style="left:178.6px;top:24px">Set up greeting</a><a class="l2" style="left:18px;top:48px">Edit automation</a><a class="l3" style="left:119px;top:48px">Sync Contacts</a><a class="l4" style="left:18px;top:72px">Generate Session</a><a class="l5" style="left:125.5px;top:72px">Sync Tags</a><a class="l6" style="left:192px;top:72px">Remark</a></div>
<div class="op" style="top:503px"><a class="l0" style="left:18px;top:24px">Configure customer service</a><a class="l1" style="left:178.6px;top:24px">Set up greeting</a><a class="l2" style="left:18px;top:48px">Edit automation</a><a class="l3" style="left:119px;top:48px">Sync Contacts</a><a class="l4" style="left:18px;top:72px">Generate Session</a><a class="l5" style="left:125.5px;top:72px">Sync Tags</a><a class="l6" style="left:192px;top:72px">Remark</a></div>
<div class="abs" style="left:280px;top:63px;width:4px;height:126px;border-radius:2px;background:#8f8f8f"></div>
</div>
<!-- main scrollbar -->
<div class="abs" style="left:1652px;top:102px;width:5px;height:596px;border-radius:3px;background:#9a9a9a"></div>
<!-- contact widget -->
<div class="abs" style="left:1638px;top:691px;width:30px;height:130px;background:#4263dd;border-radius:8px 0 0 0;z-index:9"></div>
<div class="abs" style="left:1613px;top:743px;width:80px;height:18px;line-height:18px;font-size:15px;font-weight:bold;color:#fff;text-align:center;white-space:nowrap;transform:rotate(90deg);z-index:10;letter-spacing:.45px;-webkit-text-stroke:.7px #fff">Contact us</div>
<div class="abs" style="left:1628px;top:797px;width:29px;height:29px;border-radius:50%;background:#4263dd;z-index:10"><svg class="abs" style="left:6px;top:7px" width="17" height="15" viewBox="0 0 17 15" fill="none" stroke="#fff" stroke-width="1.600"><rect x="2.500" y="1.500" width="12" height="9" rx="4.200"/><path d="M5.500 10.500v3l3-3" fill="#fff" stroke-width="1" stroke-linejoin="round"/><path d="M6.800 4.800v2.400M10.200 4.800v2.400" stroke-width="1.500" stroke-linecap="round"/><path d="M1 4.500v3M16 4.500v3" stroke-width="1.300" stroke-linecap="round"/></svg></div>
<svg class="abs" style="left:1659px;top:833px;z-index:12" width="9" height="9" viewBox="0 0 9 9"><path d="M9 0A9 9 0 0 1 0 9H9z" fill="#3a2a1c"/></svg>
</body>
</html>
